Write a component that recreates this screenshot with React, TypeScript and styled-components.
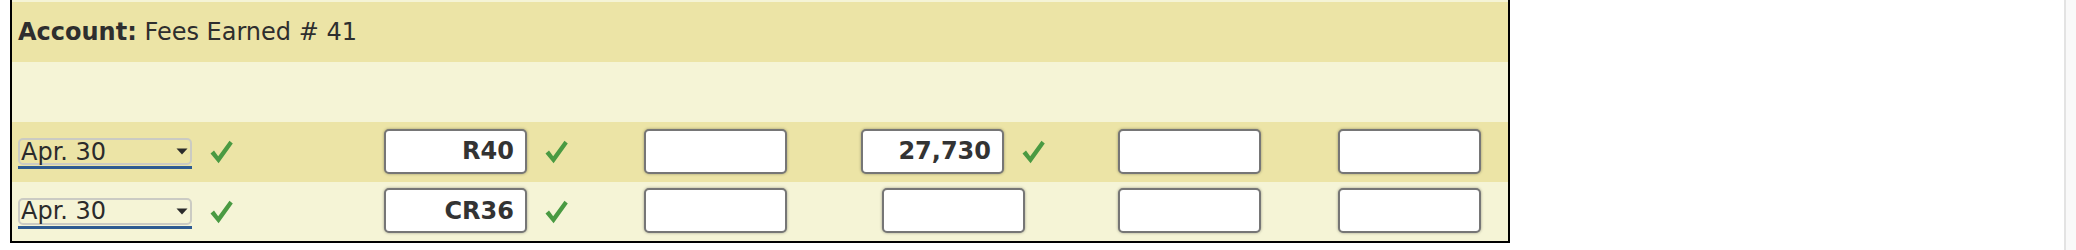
import React from "react";
import styled, { createGlobalStyle } from "styled-components";

const GlobalStyle = createGlobalStyle`
  html, body {
    margin: 0;
    padding: 0;
    background: #fff;
    font-family: "DejaVu Sans", Verdana, sans-serif;
    color: #333;
  }
`;

const DARK = "#ece4a6";
const LIGHT = "#f5f4d6";

const Page = styled.div`
  display: flex;
  height: 250px;
  width: 100%;
`;

const Main = styled.div`
  flex: 1;
  padding-left: 10px;
`;

const ScrollTrack = styled.div`
  width: 10px;
  border-left: 2px solid #e3e3e3;
  background: #f9f9f9;
`;

const Ledger = styled.div`
  width: 1500px;
  box-sizing: border-box;
  border: 2px solid #000;
  border-top: none;
  background: ${LIGHT};
  padding-top: 2px;
`;

const HeaderRow = styled.div`
  height: 60px;
  display: flex;
  align-items: center;
  padding-left: 6px;
  background: ${DARK};
  font-size: 24px;
  white-space: pre;
  color: #2e2e2e;
`;

const Row = styled.div<{ $shade: "dark" | "light"; $height?: number }>`
  display: grid;
  grid-template-columns: 346px 236px 243px 232px 241px 198px;
  height: ${(p) => p.$height ?? 60}px;
  background: ${(p) => (p.$shade === "dark" ? DARK : LIGHT)};
`;

const Cell = styled.div<{ $align?: "start" | "center" }>`
  display: flex;
  align-items: center;
  justify-content: ${(p) => (p.$align === "start" ? "flex-start" : "center")};
  padding-left: ${(p) => (p.$align === "start" ? "6px" : "0")};
  gap: 18px;
`;

const DateSelect = styled.div`
  width: 174px;
  box-sizing: border-box;
  padding-bottom: 1px;
  border-bottom: 3px solid #2e5b91;
  margin-top: 3px;
`;

const DateBox = styled.div`
  height: 27px;
  box-sizing: border-box;
  border: 2px solid #cbcbc3;
  border-radius: 5px;
  display: flex;
  align-items: center;
  justify-content: space-between;
  padding: 0 2px 0 1px;
  font-size: 24px;
  line-height: 1;
  color: #2b2b2b;
`;

const Field = styled.input`
  width: 143px;
  height: 45px;
  box-sizing: border-box;
  margin: -2px 0 0;
  border: 2px solid #767676;
  border-radius: 5px;
  background: #fff;
  box-shadow: 0 0 3px rgba(0, 0, 0, 0.35);
  padding: 0 11px 0 6px;
  text-align: right;
  font-family: "DejaVu Sans", Verdana, sans-serif;
  font-weight: 700;
  font-size: 24px;
  color: #333;
  outline: none;
`;

const Check = () => (
  <svg width="23" height="24" viewBox="0 0 23 24" style={{ flex: "none" }}>
    <path
      d="M0.5 13.5 L4 10.5 L8.2 16.2 L19.5 0.8 L22.8 3.6 L8.6 23.2 Z"
      fill="#4a9a42"
    />
  </svg>
);

const Arrow = () => (
  <svg width="12" height="7" viewBox="0 0 12 7">
    <path d="M0.5 0.5 H11.5 L6 6.5 Z" fill="#2b2b2b" />
  </svg>
);

type Entry = {
  shade: "dark" | "light";
  height?: number;
  postRef: string;
  debit?: string;
  credit?: string;
  creditOk?: boolean;
};

const entries: Entry[] = [
  { shade: "dark", postRef: "R40", credit: "27,730", creditOk: true },
  { shade: "light", height: 59, postRef: "CR36" },
];

export default function App() {
  return (
    <>
      <GlobalStyle />
      <Page>
        <Main>
          <Ledger>
            <HeaderRow>
              <b>Account:</b> Fees Earned # 41
            </HeaderRow>
            <Row $shade="light" />
            {entries.map((e, i) => (
              <Row key={i} $shade={e.shade} $height={e.height}>
                <Cell $align="start">
                  <DateSelect>
                    <DateBox>
                      <span>Apr. 30</span>
                      <Arrow />
                    </DateBox>
                  </DateSelect>
                  <Check />
                </Cell>
                <Cell>
                  <Field readOnly value={e.postRef} />
                  <Check />
                </Cell>
                <Cell>
                  <Field readOnly value={e.debit ?? ""} />
                </Cell>
                <Cell>
                  <Field readOnly value={e.credit ?? ""} />
                  {e.creditOk && <Check />}
                </Cell>
                <Cell>
                  <Field readOnly value="" />
                </Cell>
                <Cell>
                  <Field readOnly value="" />
                </Cell>
              </Row>
            ))}
          </Ledger>
        </Main>
        <ScrollTrack />
      </Page>
    </>
  );
}
